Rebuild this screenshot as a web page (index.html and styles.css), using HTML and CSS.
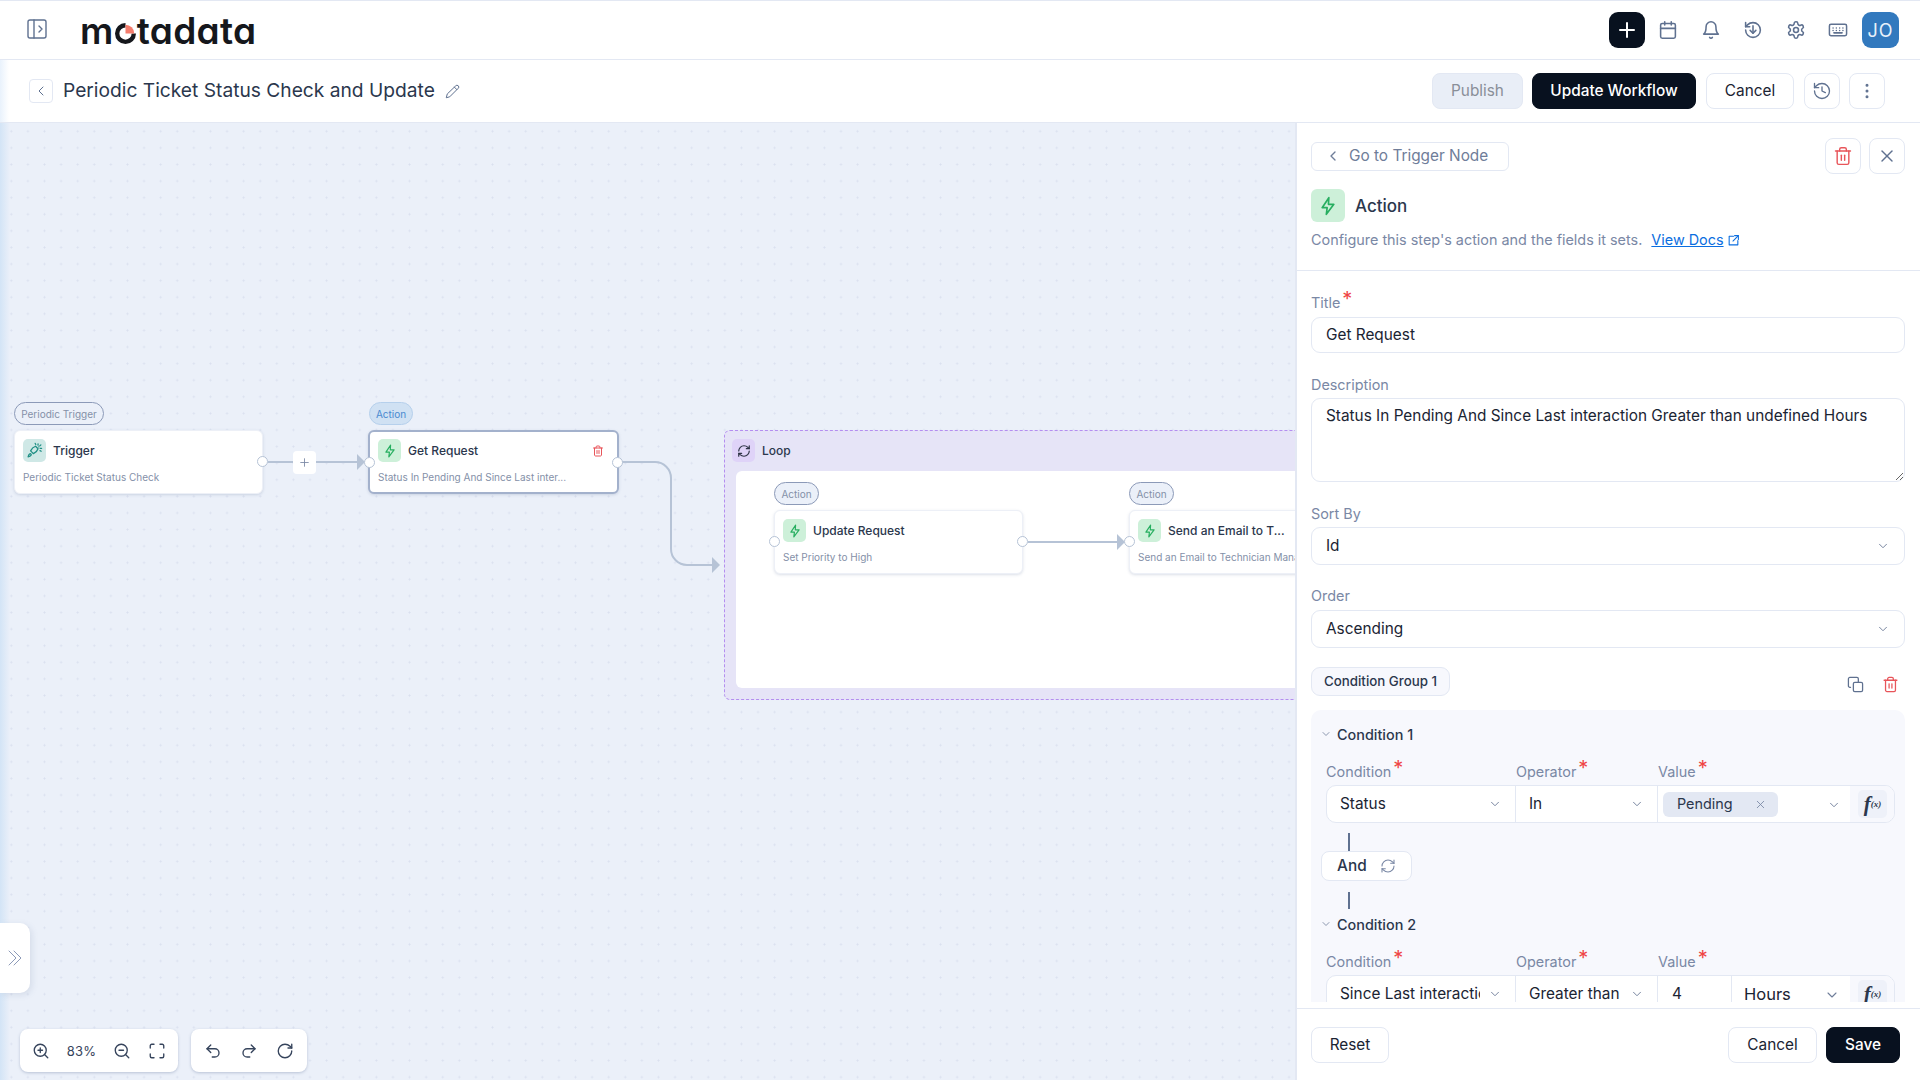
FILE: index.html
```html
<!DOCTYPE html>
<html lang="en">
<head>
    <meta charset="UTF-8">
    <meta name="viewport" content="width=device-width, initial-scale=1.0">
    <title>Periodic Ticket Status Check and Update</title>
    <link rel="stylesheet" href="styles.css">
</head>

<body>
    <!-- icon sprite -->
    <svg class="sprite" aria-hidden="true">
        <symbol id="i-toggle" viewBox="0 0 24 24"><rect x="3" y="3" width="18" height="18" rx="2"/><path d="M9 3v18"/><path d="m14 9 3 3-3 3"/></symbol>
        <symbol id="i-back" viewBox="0 0 24 24"><path d="m15 18-6-6 6-6"/></symbol>
        <symbol id="i-down" viewBox="0 0 24 24"><path d="m6 9 6 6 6-6"/></symbol>
        <symbol id="i-plus" viewBox="0 0 24 24"><path d="M5 12h14"/><path d="M12 5v14"/></symbol>
        <symbol id="i-close" viewBox="0 0 24 24"><path d="M18 6 6 18"/><path d="m6 6 12 12"/></symbol>
        <symbol id="i-calendar" viewBox="0 0 24 24"><rect x="3" y="4" width="18" height="18" rx="2"/><path d="M16 2v4"/><path d="M8 2v4"/><path d="M3 10h18"/></symbol>
        <symbol id="i-bell" viewBox="0 0 24 24"><path d="M6 8a6 6 0 0 1 12 0c0 7 3 9 3 9H3s3-2 3-9"/><path d="M10.3 21a1.94 1.94 0 0 0 3.4 0"/></symbol>
        <symbol id="i-restore" viewBox="0 0 24 24"><path d="M3 12a9 9 0 1 0 9-9 9.75 9.75 0 0 0-6.74 2.74L3 8"/><path d="M3 3v5h5"/><path d="M12 7v9"/><path d="M8.5 12.5 12 16l3.5-3.5"/></symbol>
        <symbol id="i-gear" viewBox="0 0 24 24"><path d="M12.22 2h-.44a2 2 0 0 0-2 2v.18a2 2 0 0 1-1 1.73l-.43.25a2 2 0 0 1-2 0l-.15-.08a2 2 0 0 0-2.73.73l-.22.38a2 2 0 0 0 .73 2.73l.15.1a2 2 0 0 1 1 1.72v.51a2 2 0 0 1-1 1.74l-.15.09a2 2 0 0 0-.73 2.73l.22.38a2 2 0 0 0 2.73.73l.15-.08a2 2 0 0 1 2 0l.43.25a2 2 0 0 1 1 1.73V20a2 2 0 0 0 2 2h.44a2 2 0 0 0 2-2v-.18a2 2 0 0 1 1-1.73l.43-.25a2 2 0 0 1 2 0l.15.08a2 2 0 0 0 2.73-.73l.22-.39a2 2 0 0 0-.73-2.73l-.15-.08a2 2 0 0 1-1-1.74v-.5a2 2 0 0 1 1-1.74l.15-.09a2 2 0 0 0 .73-2.73l-.22-.38a2 2 0 0 0-2.73-.73l-.15.08a2 2 0 0 1-2 0l-.43-.25a2 2 0 0 1-1-1.73V4a2 2 0 0 0-2-2z"/><circle cx="12" cy="12" r="3"/></symbol>
        <symbol id="i-keyboard" viewBox="0 0 24 24"><rect x="1.500" y="5" width="21" height="14" rx="2"/><path d="M6 9.500h.01M10 9.500h.01M14 9.500h.01M18 9.500h.01M6 12.500h.01M10 12.500h.01M14 12.500h.01M18 12.500h.01M7 15.500h10"/></symbol>
        <symbol id="i-pencil" viewBox="0 0 24 24"><path d="M17 3a2.85 2.83 0 1 1 4 4L7.5 20.5 2 22l1.5-5.5Z"/><path d="m15 5 4 4"/></symbol>
        <symbol id="i-history" viewBox="0 0 24 24"><path d="M3 12a9 9 0 1 0 9-9 9.75 9.75 0 0 0-6.74 2.74L3 8"/><path d="M3 3v5h5"/><path d="M12 7v5l4 2"/></symbol>
        <symbol id="i-dots" viewBox="0 0 24 24"><circle cx="12" cy="5" r="1"/><circle cx="12" cy="12" r="1"/><circle cx="12" cy="19" r="1"/></symbol>
        <symbol id="i-zap" viewBox="0 0 24 24"><path d="M13 2 5 14h6l-1 8 9-12h-6.500z"/></symbol>
        <symbol id="i-trash" viewBox="0 0 24 24"><path d="M3 6h18"/><path d="M19 6v14c0 1-1 2-2 2H7c-1 0-2-1-2-2V6"/><path d="M8 6V4c0-1 1-2 2-2h4c1 0 2 1 2 2v2"/><path d="M10 11v6"/><path d="M14 11v6"/></symbol>
        <symbol id="i-copy" viewBox="0 0 24 24"><rect x="9" y="9" width="13" height="13" rx="2"/><path d="M5 16H4a2 2 0 0 1-2-2V4a2 2 0 0 1 2-2h10a2 2 0 0 1 2 2v5"/></symbol>
        <symbol id="i-refresh" viewBox="0 0 24 24"><path d="M3 12a9 9 0 0 1 9-9 9.750 9.750 0 0 1 6.740 2.740L21 8"/><path d="M21 3v5h-5"/><path d="M21 12a9 9 0 0 1-9 9 9.750 9.750 0 0 1-6.740-2.740L3 16"/><path d="M8 16H3v5"/></symbol>
        <symbol id="i-rocket" viewBox="0 0 24 24"><path d="M5 17c-1.500 1-2 4-2 4s3-.5 4-2c.6-.8.5-1.500-.1-2-.5-.5-1.300-.6-1.900 0z"/><path d="M9 15l-2.500-2.500c1.500-3 4-5.500 7-6.500l3.500 3.500c-1 3-3.500 5.500-6.500 7z"/><path d="M17 2.500v2M21 4l-1.500 1.500M22 9h-2M13 2l.8 1.600M21.500 13l-1.800-.8M18 7h.01"/></symbol>
        <symbol id="i-external" viewBox="0 0 24 24"><path d="M12 4H4v16h16v-8"/><path d="M14 3h7v7"/><path d="m21 3-10 10"/></symbol>
        <symbol id="i-zoom-in" viewBox="0 0 24 24"><circle cx="11" cy="11" r="8"/><path d="m21 21-4.300-4.300"/><path d="M11 8v6"/><path d="M8 11h6"/></symbol>
        <symbol id="i-zoom-out" viewBox="0 0 24 24"><circle cx="11" cy="11" r="8"/><path d="m21 21-4.300-4.300"/><path d="M8 11h6"/></symbol>
        <symbol id="i-fit" viewBox="0 0 24 24"><path d="M8 3H5a2 2 0 0 0-2 2v3"/><path d="M21 8V5a2 2 0 0 0-2-2h-3"/><path d="M3 16v3a2 2 0 0 0 2 2h3"/><path d="M16 21h3a2 2 0 0 0 2-2v-3"/></symbol>
        <symbol id="i-undo" viewBox="0 0 24 24"><path d="M9 14 4 9l5-5"/><path d="M4 9h10.500a5.500 5.500 0 0 1 0 11H11"/></symbol>
        <symbol id="i-redo" viewBox="0 0 24 24"><path d="m15 14 5-5-5-5"/><path d="M20 9H9.500a5.500 5.500 0 0 0 0 11H13"/></symbol>
        <symbol id="i-reset" viewBox="0 0 24 24"><path d="M21 12a9 9 0 1 1-9-9c2.520 0 4.930 1 6.740 2.740L21 8"/><path d="M21 3v5h-5"/></symbol>
        <symbol id="i-chevrons" viewBox="0 0 14 16"><path d="m1 1 7 7-7 7"/><path d="m6 1 7 7-7 7"/></symbol>
    </svg>

    <header class="topbar">
        <svg class="icon toggle-icon"><use href="#i-toggle"/></svg>
        <div class="logo">m<svg class="logo-o" viewBox="0 0 24 24"><circle cx="12" cy="12" r="9.500" fill="none" stroke="#15171c" stroke-width="5"/><path d="M12 12V0h12v12z" fill="#fff"/><path d="M12 2a10 10 0 0 1 10 10H12z" fill="#f47c6c"/></svg>tadata</div>
        <div class="topbar-right">
            <button class="add-button"><svg class="icon"><use href="#i-plus"/></svg></button>
            <div class="nav-icons">
                <svg class="icon"><use href="#i-calendar"/></svg>
                <svg class="icon"><use href="#i-bell"/></svg>
                <svg class="icon"><use href="#i-restore"/></svg>
                <svg class="icon"><use href="#i-gear"/></svg>
                <svg class="icon"><use href="#i-keyboard"/></svg>
            </div>
            <div class="avatar">JO</div>
        </div>
    </header>

    <div class="subbar">
        <button class="back-button"><svg class="icon"><use href="#i-back"/></svg></button>
        <h1 class="page-title">Periodic Ticket Status Check and Update</h1>
        <svg class="icon edit-icon"><use href="#i-pencil"/></svg>
        <div class="subbar-actions">
            <button class="btn btn-muted">Publish</button>
            <button class="btn btn-dark btn-update">Update Workflow</button>
            <button class="btn btn-cancel-top">Cancel</button>
            <button class="btn btn-square"><svg class="icon"><use href="#i-history"/></svg></button>
            <button class="btn btn-square"><svg class="icon"><use href="#i-dots"/></svg></button>
        </div>
    </div>

    <main class="main">
        <section class="canvas">
            <div class="loop">
                <div class="loop-head">
                    <span class="node-icon icon-purple"><svg class="icon"><use href="#i-refresh"/></svg></span>
                    <span class="node-title">Loop</span>
                </div>
                <div class="loop-body"></div>
            </div>

            <svg class="edges" width="1296" height="957">
                <path d="M268 339H358"/>
                <path d="M622 339H655a16 16 0 0 1 16 16V426a16 16 0 0 0 16 16H713"/>
                <path d="M1028 419H1118"/>
                <polygon points="357,331 365,339 357,347"/>
                <polygon points="712,434 720,442 712,450"/>
                <polygon points="1117,411 1125,419 1117,427"/>
            </svg>

            <span class="pill pill-trigger">Periodic Trigger</span>
            <div class="node node-trigger">
                <div class="node-head">
                    <span class="node-icon icon-teal"><svg class="icon"><use href="#i-rocket"/></svg></span>
                    <span class="node-title">Trigger</span>
                </div>
                <p class="node-sub">Periodic Ticket Status Check</p>
                <i class="handle handle-right"></i>
            </div>

            <button class="edge-add"><svg class="icon"><use href="#i-plus"/></svg></button>

            <span class="pill pill-action pill-active">Action</span>
            <div class="node node-get selected">
                <div class="node-head">
                    <span class="node-icon icon-green"><svg class="icon"><use href="#i-zap"/></svg></span>
                    <span class="node-title">Get Request</span>
                    <svg class="icon node-trash"><use href="#i-trash"/></svg>
                </div>
                <p class="node-sub">Status In Pending And Since Last inter...</p>
                <i class="handle handle-left"></i>
                <i class="handle handle-right"></i>
            </div>

            <span class="pill pill-update">Action</span>
            <div class="node node-update">
                <div class="node-head">
                    <span class="node-icon icon-green"><svg class="icon"><use href="#i-zap"/></svg></span>
                    <span class="node-title">Update Request</span>
                </div>
                <p class="node-sub">Set Priority to High</p>
                <i class="handle handle-left"></i>
                <i class="handle handle-right"></i>
            </div>

            <span class="pill pill-email">Action</span>
            <div class="node node-email">
                <div class="node-head">
                    <span class="node-icon icon-green"><svg class="icon"><use href="#i-zap"/></svg></span>
                    <span class="node-title">Send an Email to T...</span>
                </div>
                <p class="node-sub">Send an Email to Technician Manager</p>
                <i class="handle handle-left"></i>
            </div>

            <button class="side-tab"><svg class="icon"><use href="#i-chevrons"/></svg></button>

            <div class="toolbars">
                <div class="toolbar">
                    <svg class="icon"><use href="#i-zoom-in"/></svg>
                    <span class="zoom-value">83%</span>
                    <svg class="icon"><use href="#i-zoom-out"/></svg>
                    <svg class="icon"><use href="#i-fit"/></svg>
                </div>
                <div class="toolbar toolbar-history">
                    <svg class="icon"><use href="#i-undo"/></svg>
                    <svg class="icon"><use href="#i-redo"/></svg>
                    <svg class="icon"><use href="#i-reset"/></svg>
                </div>
            </div>
        </section>

        <aside class="panel">
            <div class="panel-head">
                <div class="panel-top">
                    <button class="trigger-link"><svg class="icon"><use href="#i-back"/></svg>Go to Trigger Node</button>
                    <div class="panel-top-actions">
                        <button class="btn btn-icon btn-danger"><svg class="icon"><use href="#i-trash"/></svg></button>
                        <button class="btn btn-icon"><svg class="icon"><use href="#i-close"/></svg></button>
                    </div>
                </div>
                <div class="panel-title">
                    <span class="panel-icon"><svg class="icon"><use href="#i-zap"/></svg></span>
                    <h2>Action</h2>
                </div>
                <p class="panel-desc">Configure this step's action and the fields it sets. <a href="#" class="docs-link">View Docs</a><svg class="icon external"><use href="#i-external"/></svg></p>
            </div>

            <div class="panel-body">
                <label class="field-label label-title">Title<span class="req">*</span></label>
                <input class="input" type="text" value="Get Request">

                <label class="field-label label-desc">Description</label>
                <textarea class="input textarea">Status In Pending And Since Last interaction Greater than undefined Hours</textarea>

                <label class="field-label label-sort">Sort By</label>
                <div class="select">Id<svg class="icon"><use href="#i-down"/></svg></div>

                <label class="field-label label-order">Order</label>
                <div class="select">Ascending<svg class="icon"><use href="#i-down"/></svg></div>

                <div class="group-head">
                    <span class="group-pill">Condition Group 1</span>
                    <div class="group-actions">
                        <svg class="icon icon-copy"><use href="#i-copy"/></svg>
                        <svg class="icon icon-del"><use href="#i-trash"/></svg>
                    </div>
                </div>

                <div class="group-box">
                    <div class="cond-title"><svg class="icon"><use href="#i-down"/></svg>Condition 1</div>
                    <div class="cond-labels">
                        <span class="field-label">Condition<span class="req">*</span></span>
                        <span class="field-label">Operator<span class="req">*</span></span>
                        <span class="field-label">Value<span class="req">*</span></span>
                    </div>
                    <div class="cond-row">
                        <div class="cell">Status<svg class="icon"><use href="#i-down"/></svg></div>
                        <div class="cell">In<svg class="icon"><use href="#i-down"/></svg></div>
                        <div class="cell cell-value">
                            <span class="chip">Pending<svg class="icon"><use href="#i-close"/></svg></span>
                            <svg class="icon"><use href="#i-down"/></svg>
                        </div>
                        <div class="cell-fx"><span class="fx">f<small>(x)</small></span></div>
                    </div>

                    <div class="link-line line-top"></div>
                    <div class="and-box">And<svg class="icon"><use href="#i-refresh"/></svg></div>
                    <div class="link-line line-bottom"></div>

                    <div class="cond-title cond-two"><svg class="icon"><use href="#i-down"/></svg>Condition 2</div>
                    <div class="cond-labels">
                        <span class="field-label">Condition<span class="req">*</span></span>
                        <span class="field-label">Operator<span class="req">*</span></span>
                        <span class="field-label">Value<span class="req">*</span></span>
                    </div>
                    <div class="cond-row">
                        <div class="cell"><span class="clip">Since Last interaction</span><svg class="icon"><use href="#i-down"/></svg></div>
                        <div class="cell">Greater than<svg class="icon"><use href="#i-down"/></svg></div>
                        <div class="cell cell-split">
                            <span class="num">4</span>
                            <span class="unit">Hours<svg class="icon"><use href="#i-down"/></svg></span>
                        </div>
                        <div class="cell-fx"><span class="fx">f<small>(x)</small></span></div>
                    </div>
                </div>
            </div>

            <div class="panel-foot">
                <button class="btn btn-reset">Reset</button>
                <button class="btn btn-cancel">Cancel</button>
                <button class="btn btn-dark btn-save">Save</button>
            </div>
        </aside>
    </main>
</body>
</html>
```

FILE: styles.css
```css
* {
    box-sizing: border-box;
}

html,
body {
    height: 100%;
}

body {
    margin: 0;
    font-family: Inter, "Noto Sans", sans-serif;
    color: #1b2433;
    background-color: #fff;
    display: flex;
    flex-direction: column;
    overflow: hidden;
}

button {
    font-family: inherit;
    background: none;
    border: none;
    padding: 0;
    cursor: pointer;
}

p,
h1,
h2 {
    margin: 0;
    font-weight: 400;
}

.sprite {
    position: absolute;
    width: 0;
    height: 0;
}

.icon {
    display: block;
    width: 24px;
    height: 24px;
    fill: none;
    stroke: currentColor;
    stroke-width: 2;
    stroke-linecap: round;
    stroke-linejoin: round;
    flex-shrink: 0;
}

/* top bar */
.topbar {
    height: 60px;
    flex-shrink: 0;
    display: flex;
    align-items: center;
    border-top: 1px solid #e3e8f3;
    border-bottom: 1px solid #e3e8f3;
    padding-left: 25px;
}

.toggle-icon {
    color: #5f7190;
    stroke-width: 1.4;
    margin-top: -3px;
}

.logo {
    margin-left: 31px;
    display: flex;
    align-items: center;
    font-size: 37px;
    font-weight: 600;
    letter-spacing: 0.35px;
    font-feature-settings: "cv11";
    color: #15171c;
    line-height: 1;
}

.logo-o {
    width: 21px;
    height: 21px;
    margin: 7px 1px 0;
}

.topbar-right {
    margin-left: auto;
    display: flex;
    align-items: center;
    padding-right: 21px;
}

.add-button {
    width: 36px;
    height: 36px;
    border-radius: 9px;
    background-color: #08111f;
    color: #fff;
    display: flex;
    align-items: center;
    justify-content: center;
}

.nav-icons {
    display: flex;
    gap: 18.5px;
    margin: 0 12px 0 11px;
    color: #5f7190;
}

.nav-icons .icon {
    stroke-width: 1.9;
    transform: scale(0.82);
}

.avatar {
    width: 37px;
    height: 36px;
    border-radius: 9px;
    background-color: #3279be;
    color: #e8f1fa;
    font-size: 18px;
    letter-spacing: 1px;
    display: flex;
    align-items: center;
    justify-content: center;
}

/* title row */
.subbar {
    height: 63px;
    flex-shrink: 0;
    display: flex;
    align-items: center;
    padding: 0 35px 0 29px;
    border-bottom: 1px solid #e3e8f3;
    background: linear-gradient(to right, #e9f2fc, #fff 9px);
}

.back-button {
    width: 24px;
    height: 24px;
    border: 1px solid #e3e8f3;
    border-radius: 4px;
    color: #5f7190;
    display: flex;
    align-items: center;
    justify-content: center;
}

.back-button .icon {
    width: 16px;
    height: 16px;
    stroke-width: 1.5;
}

.page-title {
    margin-left: 10px;
    padding-bottom: 3px;
    font-size: 19.2px;
    color: #2b374d;
}

.edit-icon {
    width: 15px;
    height: 15px;
    margin-left: 10px;
    color: #5f7190;
    stroke-width: 1.6;
}

.subbar-actions {
    margin-left: auto;
    display: flex;
    align-items: center;
}

.btn {
    height: 36px;
    padding-bottom: 2px;
    border: 1px solid #e3e8f3;
    border-radius: 8px;
    background-color: #fff;
    font-size: 15.36px;
    color: #1b2433;
    display: flex;
    align-items: center;
    justify-content: center;
}

.btn-muted {
    width: 91px;
    background-color: #e9eef7;
    color: #8a8f99;
}

.btn-dark {
    background-color: #08111f;
    border-color: #08111f;
    color: #fff;
    font-weight: 500;
}

.btn-update {
    width: 164px;
    margin-left: 9px;
}

.btn-cancel-top {
    width: 88px;
    margin: 0 1px 0 10px;
}

.btn-square {
    width: 36px;
    padding-bottom: 0;
    margin-left: 9px;
    color: #5f7190;
}

.btn-square .icon {
    width: 20px;
    height: 20px;
    stroke-width: 1.6;
}

/* canvas */
.main {
    flex: 1;
    display: flex;
    min-height: 0;
}

.canvas {
    position: relative;
    flex: 1;
    overflow: hidden;
    background-color: #ebf0f9;
    background-image: radial-gradient(#dae0ef 0.9px, transparent 1.1px);
    background-size: 16.6px 16.6px;
    background-position: 3px 0;
}

.canvas::before {
    content: "";
    position: absolute;
    left: 0;
    top: 0;
    bottom: 0;
    width: 10px;
    background: linear-gradient(to right, #d3e4f6, rgba(211, 228, 246, 0));
}

.edges {
    position: absolute;
    left: 0;
    top: 0;
}

.edges path {
    fill: none;
    stroke: #b6c3d6;
    stroke-width: 2;
}

.edges polygon {
    fill: #b6c3d6;
}

.pill {
    position: absolute;
    height: 23px;
    border: 1px solid #8c9ab8;
    border-radius: 12px;
    background-color: #ebf0f9;
    color: #8490a8;
    font-size: 10px;
    display: flex;
    align-items: center;
    justify-content: center;
}

.pill-trigger {
    left: 14px;
    top: 279px;
    width: 90px;
}

.pill-action {
    left: 369px;
    top: 279px;
    width: 44px;
}

.pill-active {
    background-color: #d0e1f3;
    border-color: #b6d0ec;
    color: #4a8ad0;
}

.pill-update {
    left: 774px;
    top: 359px;
    width: 45px;
}

.pill-email {
    left: 1129px;
    top: 359px;
    width: 45px;
}

.node {
    position: absolute;
    width: 249px;
    height: 64px;
    padding: 8px 8px;
    background-color: #fff;
    border: 1px solid #edf0f7;
    border-radius: 6px;
    box-shadow: 0 1px 3px rgba(90, 110, 150, 0.22);
}

.node-trigger {
    left: 14px;
    top: 307px;
}

.node-get {
    left: 368px;
    top: 307px;
    width: 251px;
}

.node-update {
    left: 774px;
    top: 387px;
}

.node-email {
    left: 1129px;
    top: 387px;
}

.selected {
    border: 2px solid #a3b1cc;
    padding: 7px 8px;
}

.node-head {
    display: flex;
    align-items: center;
    gap: 7px;
}

.node-icon {
    width: 23px;
    height: 23px;
    border-radius: 5px;
    display: flex;
    align-items: center;
    justify-content: center;
}

.node-icon .icon {
    width: 14px;
    height: 14px;
}

.icon-teal {
    background-color: #cfe8e6;
    color: #1f8f84;
}

.icon-teal .icon {
    width: 17px;
    height: 17px;
    stroke-width: 1.8;
}

.icon-green {
    background-color: #cdf0d9;
    color: #27ae60;
}

.icon-purple {
    background-color: #dfd3f8;
    color: #2c3244;
}

.node-title {
    font-size: 12px;
    font-weight: 500;
    color: #2b374d;
    white-space: nowrap;
}

.node-sub {
    margin-top: 8px;
    font-size: 10px;
    line-height: 14px;
    color: #8490a8;
    white-space: nowrap;
    overflow: hidden;
}

.node-trash {
    margin-left: auto;
    margin-right: 5px;
    width: 12px;
    height: 12px;
    color: #e8555a;
}

.handle {
    position: absolute;
    top: 25px;
    width: 11px;
    height: 11px;
    border-radius: 50%;
    background-color: #fff;
    border: 1px solid #b6c3d6;
}

.handle-left {
    left: -6px;
}

.handle-right {
    right: -6px;
}

.edge-add {
    position: absolute;
    left: 293px;
    top: 328px;
    width: 23px;
    height: 23px;
    border-radius: 4px;
    background-color: #fff;
    color: #7a88a5;
    display: flex;
    align-items: center;
    justify-content: center;
}

.edge-add .icon {
    width: 13px;
    height: 13px;
    stroke-width: 1.6;
}

.loop {
    position: absolute;
    left: 724px;
    top: 307px;
    width: 700px;
    height: 270px;
    background-color: #e6e4f7;
    border: 1px dashed #b48ef0;
    border-radius: 6px;
    padding: 8px 0 11px 11px;
    display: flex;
    flex-direction: column;
}

.loop-head {
    display: flex;
    align-items: center;
    gap: 7px;
    margin-left: -4px;
}

.loop-body {
    margin-top: 9px;
    flex: 1;
    background-color: #fff;
    border-radius: 6px;
}

.side-tab {
    position: absolute;
    left: 0;
    top: 800px;
    width: 30px;
    height: 70px;
    background-color: #fff;
    border-radius: 0 10px 10px 0;
    box-shadow: 2px 2px 6px rgba(90, 110, 150, 0.15);
    color: #8c9ab8;
    padding-left: 8px;
}

.side-tab .icon {
    width: 14px;
    height: 16px;
    stroke-width: 1;
}

.toolbars {
    position: absolute;
    left: 20px;
    top: 906px;
    display: flex;
    gap: 13px;
}

.toolbar {
    height: 43px;
    display: flex;
    align-items: center;
    gap: 16.5px;
    padding: 0 12px;
    background-color: #fff;
    border-radius: 8px;
    box-shadow: 0 1px 3px rgba(90, 110, 150, 0.35);
    color: #36445c;
}

.toolbar-history {
    gap: 18px;
    padding: 0 13px;
}

.toolbar .icon {
    width: 18px;
    height: 18px;
    stroke-width: 1.8;
}

.zoom-value {
    width: 30px;
    text-align: center;
    font-size: 13px;
    letter-spacing: 0.3px;
    white-space: nowrap;
}

/* side panel */
.panel {
    width: 625px;
    flex-shrink: 0;
    display: flex;
    flex-direction: column;
    background-color: #fff;
    border-left: 2px solid #e3e8f3;
}

.panel-head {
    height: 148px;
    flex-shrink: 0;
    padding: 15px 15px 0 14px;
    border-bottom: 1px solid #e3e8f3;
}

.panel-top {
    display: flex;
    align-items: center;
    justify-content: space-between;
}

.trigger-link {
    width: 198px;
    height: 29px;
    padding-bottom: 1px;
    padding-left: 13px;
    border: 1px solid #e3e8f3;
    border-radius: 6px;
    display: flex;
    align-items: center;
    gap: 8px;
    font-size: 15.36px;
    color: #6f7d99;
}

.trigger-link .icon {
    width: 16px;
    height: 16px;
}

.panel-top-actions {
    display: flex;
    gap: 8px;
}

.btn-icon {
    width: 36px;
    padding-bottom: 0;
    color: #5f7190;
}

.btn-icon .icon {
    width: 20px;
    height: 20px;
    stroke-width: 1.7;
}

.btn-danger {
    color: #e8555a;
}

.panel-title {
    margin-top: 15px;
    display: flex;
    align-items: center;
    gap: 10px;
}

.panel-icon {
    width: 34px;
    height: 33px;
    border-radius: 6px;
    background-color: #cdf0d9;
    color: #27ae60;
    display: flex;
    align-items: center;
    justify-content: center;
}

.panel-icon .icon {
    width: 20px;
    height: 20px;
}

.panel-title h2 {
    font-size: 17px;
    font-weight: 500;
    color: #2b374d;
}

.panel-desc {
    margin-top: 8px;
    font-size: 14.4px;
    line-height: 20px;
    color: #7a88a5;
    display: flex;
    align-items: center;
    white-space: pre;
}

.docs-link {
    margin-left: 5px;
    color: #0b6ee0;
}

.external {
    width: 13px;
    height: 13px;
    margin-left: 3px;
    color: #0b6ee0;
    stroke-width: 2;
}

.panel-body {
    flex: 1;
    min-height: 0;
    overflow: hidden;
    margin-bottom: 6px;
    padding: 22px 15px 0 14px;
}

.field-label {
    display: block;
    font-size: 14.4px;
    line-height: 20px;
    color: #7a88a5;
}

.req {
    color: #ef4444;
    font-size: 20px;
    line-height: 0;
    margin-left: 2px;
    vertical-align: 2px;
}

.input {
    display: block;
    width: 100%;
    height: 36px;
    margin-top: 4px;
    padding: 0 14px 2px;
    border: 1px solid #e3e8f3;
    border-radius: 9px;
    font-family: inherit;
    font-size: 15.36px;
    color: #1b2433;
    background-color: #fff;
    outline: none;
}

.textarea {
    height: 84px;
    margin-top: 3px;
    padding: 7px 14px;
    line-height: 20px;
}

.label-desc,
.label-sort {
    margin-top: 22px;
}

.label-order {
    margin-top: 21px;
}

.select {
    height: 38px;
    margin-top: 3px;
    padding: 0 14px 2px;
    border: 1px solid #e3e8f3;
    border-radius: 9px;
    font-size: 15.36px;
    display: flex;
    align-items: center;
    justify-content: space-between;
}

.label-order + .select {
    margin-top: 4px;
}

.select .icon {
    width: 14px;
    height: 14px;
    margin-top: 2px;
    color: #6f7d99;
    stroke-width: 1.6;
}

.group-head {
    margin-top: 19px;
    display: flex;
    align-items: center;
    justify-content: space-between;
}

.group-pill {
    height: 29px;
    padding: 0 12px 1px;
    border: 1px solid #e3e8f3;
    border-radius: 9px;
    background-color: #f7f8fd;
    font-size: 13.3px;
    font-weight: 500;
    color: #2b374d;
    display: flex;
    align-items: center;
}

.group-actions {
    display: flex;
    gap: 18px;
    margin-top: 5px;
    margin-right: 6px;
}

.group-actions .icon {
    width: 17px;
    height: 17px;
    stroke-width: 1.8;
}

.icon-copy {
    color: #5f7190;
}

.icon-del {
    color: #e8555a;
}

.group-box {
    margin-top: 14px;
    padding: 14px 10px 0 15px;
    background-color: #f7f8fd;
    border-radius: 10px 10px 0 0;
    height: 320px;
}

.cond-title {
    height: 20px;
    display: flex;
    align-items: center;
    gap: 5px;
    margin-left: -6px;
    font-size: 14.4px;
    font-weight: 500;
    color: #2b374d;
}

.cond-title .icon {
    width: 12px;
    height: 12px;
    color: #6f7d99;
    stroke-width: 1.6;
}

.cond-two {
    margin-top: 5px;
}

.cond-labels {
    margin-top: 18px;
    display: grid;
    grid-template-columns: 190px 142px 1fr;
}

.cond-row {
    margin-top: 3px;
    height: 38px;
    display: grid;
    grid-template-columns: 189px 142px 1fr 44px;
    background-color: #fff;
    border: 1px solid #e3e8f3;
    border-radius: 10px;
    font-size: 15.36px;
}

.cell {
    display: flex;
    align-items: center;
    justify-content: space-between;
    padding: 0 13px 2px 13px;
    border-right: 1px solid #e3e8f3;
    white-space: nowrap;
    overflow: hidden;
}

.cell:first-child {
    border-radius: 10px 0 0 10px;
}

.cell .icon {
    width: 14px;
    height: 14px;
    margin-top: 2px;
    color: #6f7d99;
    stroke-width: 1.6;
}

.clip {
    width: 140px;
    overflow: hidden;
}

.cell-value {
    border-right: none;
    padding: 0 9px 0 5px;
}

.chip {
    width: 115px;
    height: 25px;
    padding: 0 11px 2px 14px;
    border-radius: 6px;
    background-color: #e3e8f3;
    font-size: 14.4px;
    display: flex;
    align-items: center;
    justify-content: space-between;
    color: #2b374d;
}

.chip .icon {
    width: 13px;
    height: 13px;
    color: #7a88a5;
}

.cell-split {
    padding: 0;
    border-right: none;
    align-items: stretch;
}

.num {
    width: 74px;
    padding: 0 0 2px 14px;
    border-right: 1px solid #e3e8f3;
    display: flex;
    align-items: center;
}

.unit {
    flex: 1;
    padding: 0 10px 0 12px;
    display: flex;
    align-items: center;
    justify-content: space-between;
    font-size: 16.5px;
}

.unit .icon {
    width: 16px;
    height: 16px;
}

.cell-fx {
    background-color: #f7f8fd;
    border-radius: 0 9px 9px 0;
    display: flex;
    align-items: center;
    padding-left: 8px;
}

.fx {
    width: 29px;
    height: 28px;
    border-radius: 5px;
    background-color: #eef1f9;
    display: flex;
    align-items: center;
    justify-content: center;
    font-family: "Liberation Serif", serif;
    font-style: italic;
    font-weight: 700;
    font-size: 21px;
    color: #2b374d;
}

.fx small {
    font-size: 9px;
}

.link-line {
    width: 2px;
    background-color: #5f7190;
    margin-left: 22px;
}

.line-top {
    height: 18px;
    margin-top: 10px;
}

.line-bottom {
    height: 17px;
    margin-top: 11px;
}

.and-box {
    width: 91px;
    height: 30px;
    margin-left: -5px;
    padding: 0 15px 2px 15px;
    background-color: #fff;
    border: 1px solid #e3e8f3;
    border-radius: 8px;
    font-size: 15.36px;
    font-weight: 500;
    color: #2b374d;
    display: flex;
    align-items: center;
    justify-content: space-between;
}

.and-box .icon {
    width: 16px;
    height: 16px;
    margin-top: 2px;
    color: #7a88a5;
    stroke-width: 1.6;
}

.panel-foot {
    height: 72px;
    flex-shrink: 0;
    border-top: 1px solid #e3e8f3;
    display: flex;
    align-items: center;
    padding: 0 20px 0 14px;
}

.panel-foot .btn {
    padding-bottom: 0;
}

.btn-reset {
    width: 78px;
    margin-right: auto;
}

.btn-cancel {
    width: 89px;
}

.btn-save {
    width: 74px;
    margin-left: 9px;
}
```
